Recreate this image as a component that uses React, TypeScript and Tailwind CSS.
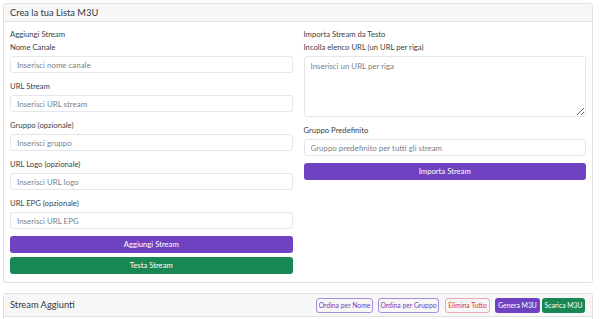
import React from 'react';

const font = { fontFamily: 'Lato, "Liberation Sans", sans-serif' };

const Field: React.FC<{ label: string; placeholder: string }> = ({ label, placeholder }) => (
  <div className="mb-[7px]">
    <label className="block h-[12px] leading-[12px] text-[7.7px] text-[#3a3f44] mb-[3px]">{label}</label>
    <input
      className="block w-full h-[17px] rounded-[3px] border border-[#e3e6ea] bg-white px-[6px] text-[7.9px] text-[#212529] placeholder:text-[#7a8288] outline-none"
      placeholder={placeholder}
    />
  </div>
);

export default function App() {
  return (
    <div className="w-[600px] h-[319px] overflow-hidden bg-white pt-[3px] pl-[3px]" style={font}>
      <div className="w-[590px] rounded-[3px] border border-[#e1e1e1]">
        <div className="h-[18px] bg-[#f7f7f7] border-b border-[#e1e1e1] px-[6px] flex items-center text-[9.3px] text-[#33383d]">
          Crea la tua Lista M3U
        </div>
        <div className="pt-[6px] pb-[8px] px-[6px] grid grid-cols-2 gap-x-[11px]">
          <div>
            <div className="h-[12px] leading-[12px] text-[7.7px] text-[#3a3f44] mb-[1px]">Aggiungi Stream</div>
            <Field label="Nome Canale" placeholder="Inserisci nome canale" />
            <Field label="URL Stream" placeholder="Inserisci URL stream" />
            <Field label="Gruppo (opzionale)" placeholder="Inserisci gruppo" />
            <Field label="URL Logo (opzionale)" placeholder="Inserisci URL logo" />
            <Field label="URL EPG (opzionale)" placeholder="Inserisci URL EPG" />
            <button className="block w-full h-[17px] rounded-[3px] bg-[#6f42c1] text-white text-[7.7px] mb-[4px]">
              Aggiungi Stream
            </button>
            <button className="block w-full h-[17px] rounded-[3px] bg-[#198754] text-white text-[7.7px]">
              Testa Stream
            </button>
          </div>
          <div>
            <div className="h-[12px] leading-[12px] text-[7.7px] text-[#3a3f44] mb-[1px]">Importa Stream da Testo</div>
            <div className="mb-[7px]">
              <label className="block h-[12px] leading-[12px] text-[7.7px] text-[#3a3f44] mb-[3px]">
                Incolla elenco URL (un URL per riga)
              </label>
              <textarea
                className="block w-full h-[61px] rounded-[3px] border border-[#e3e6ea] bg-white px-[6px] py-[4px] text-[7.9px] text-[#212529] placeholder:text-[#7a8288] outline-none"
                placeholder="Inserisci un URL per riga"
              />
            </div>
            <Field label="Gruppo Predefinito" placeholder="Gruppo predefinito per tutti gli stream" />
            <button className="block w-full h-[17px] rounded-[3px] bg-[#6f42c1] text-white text-[7.7px]">
              Importa Stream
            </button>
          </div>
        </div>
      </div>

      <div className="mt-[10px] w-[590px] rounded-[3px] border border-[#e1e1e1]">
        <div className="h-[23px] bg-[#f7f7f7] border-b border-[#e1e1e1] pl-[6px] pr-[7px] flex items-center justify-between">
          <span className="text-[9.3px] text-[#33383d]">Stream Aggiunti</span>
          <div className="flex items-center">
            <button className="w-[57px] h-[15px] rounded-[3px] border border-[#a88ddc] text-[#6f42c1] text-[6.8px]">
              Ordina per Nome
            </button>
            <button className="ml-[5px] w-[61px] h-[15px] rounded-[3px] border border-[#a88ddc] text-[#6f42c1] text-[6.8px]">
              Ordina per Gruppo
            </button>
            <button className="ml-[6px] w-[45px] h-[15px] rounded-[3px] border border-[#eea5ad] text-[#dc3545] text-[6.8px]">
              Elimina Tutto
            </button>
            <button className="ml-[5px] w-[45px] h-[15px] rounded-[3px] bg-[#6f42c1] text-white text-[6.8px]">
              Genera M3U
            </button>
            <button className="ml-[2px] w-[43px] h-[15px] rounded-[3px] bg-[#198754] text-white text-[6.8px]">
              Scarica M3U
            </button>
          </div>
        </div>
        <div className="h-[20px]" />
      </div>
    </div>
  );
}
